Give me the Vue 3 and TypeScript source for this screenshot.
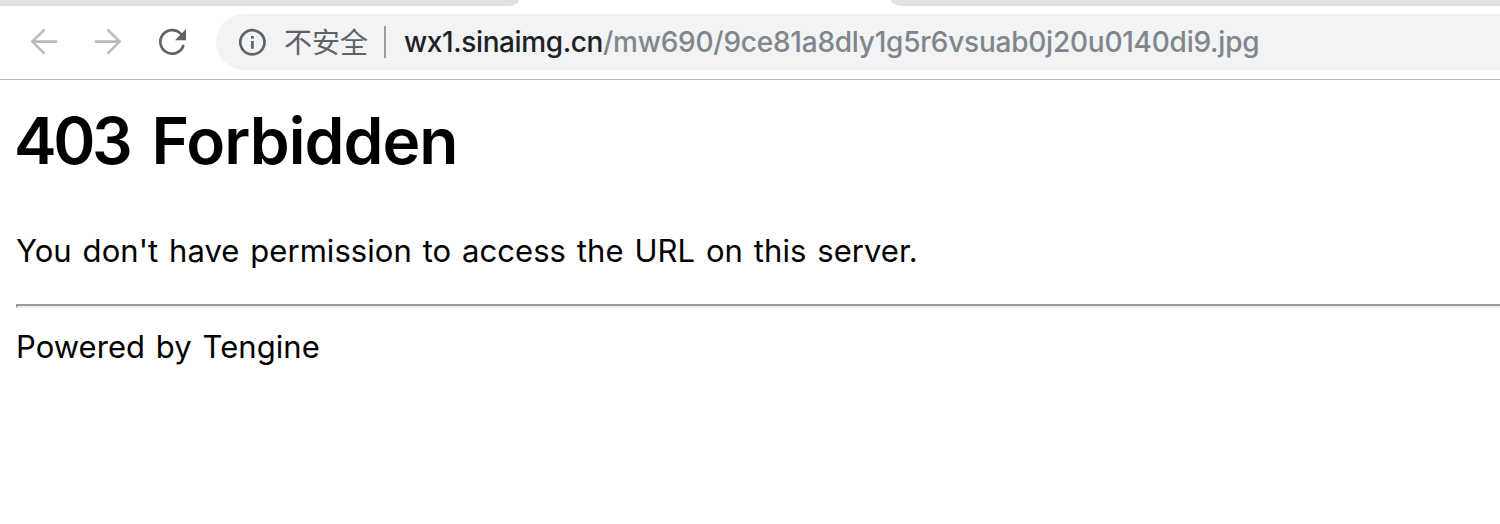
<script setup lang="ts">
const host = 'wx1.sinaimg.cn'
const path = '/mw690/9ce81a8dly1g5r6vsuab0j20u0140di9.jpg'
</script>

<template>
  <div class="window">
    <div class="tabs"><div class="tab left"></div><div class="tab right"></div></div>
    <header class="toolbar">
      <svg class="nav" viewBox="0 0 190 56" fill="none">
        <g stroke="#babcbe" stroke-width="2.6">
          <path d="M57 27.600H33M44.500 15.500L32.400 27.600L44.500 39.700" />
          <path d="M95 27.600H119M107.500 15.500L119.600 27.600L107.500 39.700" />
        </g>
        <path d="M180.600 19.600A11.800 11.800 0 1 0 183.200 32" stroke="#5f6368" stroke-width="2.7" stroke-linecap="round" />
        <path d="M186 15V26.300H175Z" fill="#5f6368" />
      </svg>
      <div class="address">
        <svg class="info" viewBox="0 0 28 28" fill="none" stroke="#5f6368" stroke-width="2.7">
          <circle cx="14.400" cy="14.300" r="12.100" /><path d="M14.400 13V20.800M14.400 8V10.700" />
        </svg>
        <span class="security">不安全</span>
        <span class="divider"></span>
        <span class="url"><span class="host">{{ host }}</span><span class="path">{{ path }}</span></span>
      </div>
    </header>
    <main>
      <h1><span class="code">403</span> Forbidden</h1>
      <p>You don't have permission to access the URL on this server.</p>
      <hr>
      <footer>Powered by Tengine</footer>
    </main>
  </div>
</template>

<style>
body { margin: 0; overflow: hidden; }
</style>
<style scoped>
.window { width: 1500px; height: 524px; background: #fff; overflow: hidden; }
.tabs { display: flex; justify-content: space-between; height: 6px; }
.tab { background: #dee1e6; height: 6px; }
.left { width: 519px; border-bottom-right-radius: 12px 6px; }
.right { width: 609px; border-bottom-left-radius: 12px 6px; }
.toolbar { box-sizing: border-box; height: 74px; padding-top: 8px; display: flex; border-bottom: 1px solid #b6b6b6; }
.nav { width: 190px; height: 56px; flex: none; }
.address { margin-left: 26px; width: 1284px; height: 56px; border-radius: 28px 0 0 28px; background: #f1f3f4; display: flex; align-items: center; }
.info { width: 28px; height: 28px; margin-left: 22px; flex: none; }
.security { margin-left: 18px; width: 85px; font: 28px/54px "Noto Sans CJK SC", sans-serif; color: #5f6368; white-space: nowrap; padding-bottom: 2px; }
.divider { width: 2px; height: 32px; background: #9aa0a6; margin-left: 15px; }
.url { margin-left: 18px; font: 450 28px/56px Inter, sans-serif; white-space: nowrap; }
.host { color: #202124; letter-spacing: -0.4px; }
.path { color: #80868b; letter-spacing: -0.24px; }
main { padding-left: 16px; }
h1 { margin: 21px 0 0 -2px; font: 600 64px/80px Inter, sans-serif; color: #000; white-space: nowrap; letter-spacing: -0.95px; word-spacing: 7px; }
.code { letter-spacing: -3.4px; }
p { margin: 50px 0 0; font: 31px/40px Inter, sans-serif; color: #000; white-space: nowrap; letter-spacing: 0.05px; word-spacing: 2.1px; }
hr { box-sizing: border-box; height: 4px; margin: 33px 0 0; border: solid; border-width: 2px 0 2px 2px; border-color: #999 #eee #eee #999; }
footer { margin-top: 19px; font: 31px/40px Inter, sans-serif; color: #000; letter-spacing: 0.05px; word-spacing: 2px; }
</style>
